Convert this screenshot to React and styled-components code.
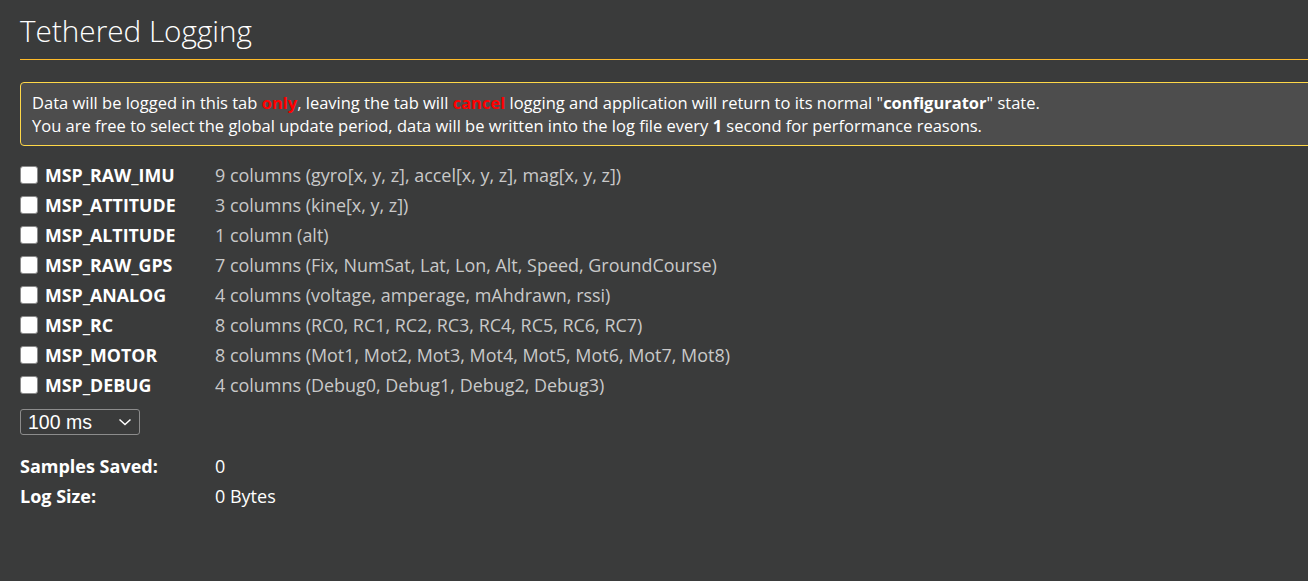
import React from "react";
import styled, { createGlobalStyle } from "styled-components";

const Global = createGlobalStyle`
  html, body {
    margin: 0;
    padding: 0;
    background: #3a3b3b;
    overflow: hidden;
  }
  body {
    font-family: "Open Sans", "DejaVu Sans", sans-serif;
    color: #ffffff;
  }
`;

const Page = styled.div`
  width: 1340px;
  min-height: 581px;
  padding: 0 0 0 20px;
  box-sizing: border-box;
`;

const Title = styled.h1`
  margin: 0;
  padding: 12px 0 9px 0;
  font-size: 29.7px;
  font-weight: 300;
  line-height: 38px;
  color: #ffffff;
  border-bottom: 1px solid #ffbb2a;
`;

const Note = styled.div`
  margin-top: 22px;
  padding: 8px 11px 8px 11px;
  background: #4d4d4d;
  border: 1px solid #ffd848;
  border-radius: 4px;
  font-size: 16.5px;
  line-height: 23px;
  color: #ffffff;
`;

const Red = styled.strong`
  color: #ff0000;
  font-weight: 700;
`;

const Strong = styled.strong`
  font-weight: 700;
`;

const List = styled.div`
  margin-top: 14px;
  display: flex;
  flex-direction: column;
`;

const Row = styled.label`
  display: grid;
  grid-template-columns: 25px 170px auto;
  align-items: center;
  height: 30px;
`;

const Box = styled.span`
  width: 18px;
  height: 18px;
  background: #ffffff;
  border: 1px solid #8a8a8a;
  border-radius: 3px;
  box-sizing: border-box;
`;

const Name = styled.span`
  font-size: 17.8px;
  font-weight: 700;
  color: #ffffff;
`;

const Desc = styled.span`
  font-size: 17.95px;
  color: #c9c9c9;
`;

const Select = styled.div`
  margin-top: 9px;
  width: 120px;
  height: 26px;
  box-sizing: border-box;
  border: 1px solid #8c8c8c;
  border-radius: 3px;
  display: flex;
  align-items: center;
  justify-content: space-between;
  padding: 0 7px 0 7px;
  font-family: "Liberation Sans", Arial, sans-serif;
  font-size: 19.5px;
  color: #ffffff;
`;

const Stats = styled.div`
  margin-top: 16px;
  display: flex;
  flex-direction: column;
`;

const StatRow = styled.div`
  display: grid;
  grid-template-columns: 195px auto;
  height: 30px;
  align-items: center;
  font-size: 18px;
`;

const StatLabel = styled.span`
  font-weight: 700;
`;

const messages = [
  ["MSP_RAW_IMU", "9 columns (gyro[x, y, z], accel[x, y, z], mag[x, y, z])"],
  ["MSP_ATTITUDE", "3 columns (kine[x, y, z])"],
  ["MSP_ALTITUDE", "1 column (alt)"],
  ["MSP_RAW_GPS", "7 columns (Fix, NumSat, Lat, Lon, Alt, Speed, GroundCourse)"],
  ["MSP_ANALOG", "4 columns (voltage, amperage, mAhdrawn, rssi)"],
  ["MSP_RC", "8 columns (RC0, RC1, RC2, RC3, RC4, RC5, RC6, RC7)"],
  ["MSP_MOTOR", "8 columns (Mot1, Mot2, Mot3, Mot4, Mot5, Mot6, Mot7, Mot8)"],
  ["MSP_DEBUG", "4 columns (Debug0, Debug1, Debug2, Debug3)"],
];

export default function App() {
  return (
    <Page>
      <Global />
      <Title>Tethered Logging</Title>
      <Note>
        Data will be logged in this tab <Red>only</Red>, leaving the tab will{" "}
        <Red>cancel</Red> logging and application will return to its normal "
        <Strong>configurator</Strong>" state.
        <br />
        You are free to select the global update period, data will be written
        into the log file every <Strong>1</Strong> second for performance
        reasons.
      </Note>
      <List>
        {messages.map(([name, desc]) => (
          <Row key={name}>
            <Box />
            <Name>{name}</Name>
            <Desc>{desc}</Desc>
          </Row>
        ))}
      </List>
      <Select>
        <span>100 ms</span>
        <svg width="14" height="8" viewBox="0 0 14 8">
          <path d="M1.5 1.5 L7 6.5 L12.5 1.5" fill="none" stroke="#ffffff" strokeWidth="1.5" />
        </svg>
      </Select>
      <Stats>
        <StatRow>
          <StatLabel>Samples Saved:</StatLabel>
          <span>0</span>
        </StatRow>
        <StatRow>
          <StatLabel>Log Size:</StatLabel>
          <span>0 Bytes</span>
        </StatRow>
      </Stats>
    </Page>
  );
}
